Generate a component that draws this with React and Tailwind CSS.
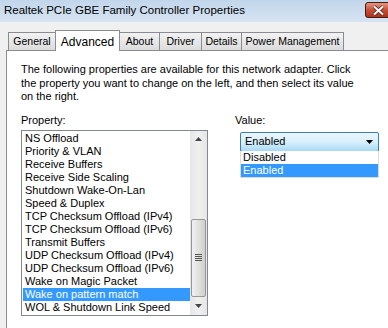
import React from 'react'

const tabs = [
  { label: 'General', w: 'w-[48px]' },
  { label: 'Advanced', w: 'w-[65px]' },
  { label: 'About', w: 'w-[41px]' },
  { label: 'Driver', w: 'w-[43px]' },
  { label: 'Details', w: 'w-[41px]' },
  { label: 'Power Management', w: 'w-[103px]' },
]

const props = [
  'NS Offload',
  'Priority & VLAN',
  'Receive Buffers',
  'Receive Side Scaling',
  'Shutdown Wake-On-Lan',
  'Speed & Duplex',
  'TCP Checksum Offload (IPv4)',
  'TCP Checksum Offload (IPv6)',
  'Transmit Buffers',
  'UDP Checksum Offload (IPv4)',
  'UDP Checksum Offload (IPv6)',
  'Wake on Magic Packet',
  'Wake on pattern match',
  'WOL & Shutdown Link Speed',
]

const font = { fontFamily: 'Tahoma, "Liberation Sans", Arial, sans-serif' }

function Tab({ label, w, active }) {
  if (active) {
    return (
      <div className={`relative z-10 -mb-px -ml-px flex h-[21px] justify-center border border-b-0 border-[#898c95] bg-white pt-[2px] text-[12px] ${w}`}>
        {label}
      </div>
    )
  }
  return (
    <div className={`-ml-px flex h-[18px] items-center justify-center whitespace-nowrap border border-b-0 border-[#898c95] bg-gradient-to-b from-[#f2f2f2] to-[#dcdcdc] text-[10.5px] first:ml-0 ${w}`}>
      {label}
    </div>
  )
}

function ScrollBar() {
  return (
    <div className="flex w-[17px] flex-col bg-gradient-to-r from-[#e6e6e6] via-[#f0f0f0] to-[#e6e6e6]">
      <div className="flex h-[17px] items-center justify-center">
        <svg width="7" height="4" viewBox="0 0 7 4"><path d="M3.5 0 L7 4 L0 4 Z" fill="#444" /></svg>
      </div>
      <div className="flex-1" />
      <div className="mx-[1px] flex h-[78px] items-center justify-center rounded-[2px] border border-[#979797] bg-gradient-to-r from-[#f1f1f1] via-[#e0e0e0] to-[#cfcfcf]">
        <svg width="7" height="7" viewBox="0 0 7 7">
          <path d="M0 0.5 H7 M0 2.5 H7 M0 4.5 H7 M0 6.5 H7" stroke="#555" strokeWidth="1" />
        </svg>
      </div>
      <div className="flex h-[18px] items-center justify-center">
        <svg width="7" height="4" viewBox="0 0 7 4"><path d="M0 0 L7 0 L3.5 4 Z" fill="#444" /></svg>
      </div>
    </div>
  )
}

export default function App() {
  return (
    <div className="flex h-[328px] w-[388px] flex-col overflow-hidden bg-[#f0f0f0] text-black" style={font}>
      <div className="flex h-[22px] shrink-0 items-center bg-gradient-to-b from-[#c2d6eb] to-[#d6e4f2] pl-[4px]">
        <span className="flex-1 whitespace-nowrap text-[11.5px]" style={{ fontFamily: '"Liberation Sans", Arial, sans-serif' }}>
          Realtek PCIe GBE Family Controller Properties
        </span>
        <div className="-mr-[21px] mb-[2px] flex h-[16px] w-[44px] shrink-0 items-center rounded-[3px] border border-[#4a1a10] bg-[#c24a32] bg-gradient-to-b from-[#e29683] via-[#c64e36] to-[#a8321c] pl-[6px]">
          <svg width="13" height="11" viewBox="0 0 13 11">
            <path d="M2 1.5 L11 9.5 M11 1.5 L2 9.5" stroke="#5a2318" strokeWidth="3.6" />
            <path d="M2 1.5 L11 9.5 M11 1.5 L2 9.5" stroke="#ffffff" strokeWidth="2" />
          </svg>
        </div>
      </div>

      <div className="flex h-[28px] shrink-0 items-end pl-[8px]">
        {tabs.map((t) => (
          <Tab key={t.label} label={t.label} w={t.w} active={t.label === 'Advanced'} />
        ))}
      </div>

      <div className="ml-[6px] flex flex-1 flex-col border-l border-t border-[#898c95] bg-white pl-[14px] pt-[12px] text-[11px]">
        <p className="w-[345px] leading-[13.5px]">
          The following properties are available for this network adapter. Click the property you want to change on the left, and then select its value on the right.
        </p>

        <div className="mt-[10px] flex">
          <div className="flex w-[187px] flex-col">
            <div className="h-[13px] leading-[13px]">Property:</div>
            <div className="mt-[3px] flex h-[186px] border border-[#828790] bg-white">
              <div className="flex flex-1 flex-col pl-[1px] pt-[1px]">
                {props.map((p) => (
                  <div
                    key={p}
                    className={
                      p === 'Wake on pattern match'
                        ? 'h-[13px] whitespace-nowrap bg-[#3399ff] pl-[2px] leading-[13px] text-white'
                        : 'h-[13px] whitespace-nowrap pl-[2px] leading-[13px]'
                    }
                  >
                    {p}
                  </div>
                ))}
              </div>
              <ScrollBar />
            </div>
          </div>

          <div className="ml-[27px] flex flex-col">
            <div className="h-[13px] leading-[13px]">Value:</div>
            <div className="relative ml-[5px] mt-[5px] w-[139px]">
              <div className="flex h-[20px] items-center justify-between rounded-[2px] border border-[#3c7fb1] bg-gradient-to-b from-[#eaf6fd] via-[#d9f0fc] to-[#a7d9f5] pl-[4px] pr-[5px] text-[11px]">
                <span>Enabled</span>
                <svg width="7" height="4" viewBox="0 0 7 4"><path d="M0 0 L7 0 L3.5 4 Z" fill="#000" /></svg>
              </div>
              <div className="absolute left-0 top-[19px] w-[139px] border border-t-0 border-[#dcdcdc] bg-white">
                <div className="h-[13px] pl-[2px] leading-[13px]">Disabled</div>
                <div className="h-[13px] bg-[#3399ff] pl-[2px] leading-[13px] text-white">Enabled</div>
              </div>
            </div>
          </div>
        </div>
      </div>
    </div>
  )
}
